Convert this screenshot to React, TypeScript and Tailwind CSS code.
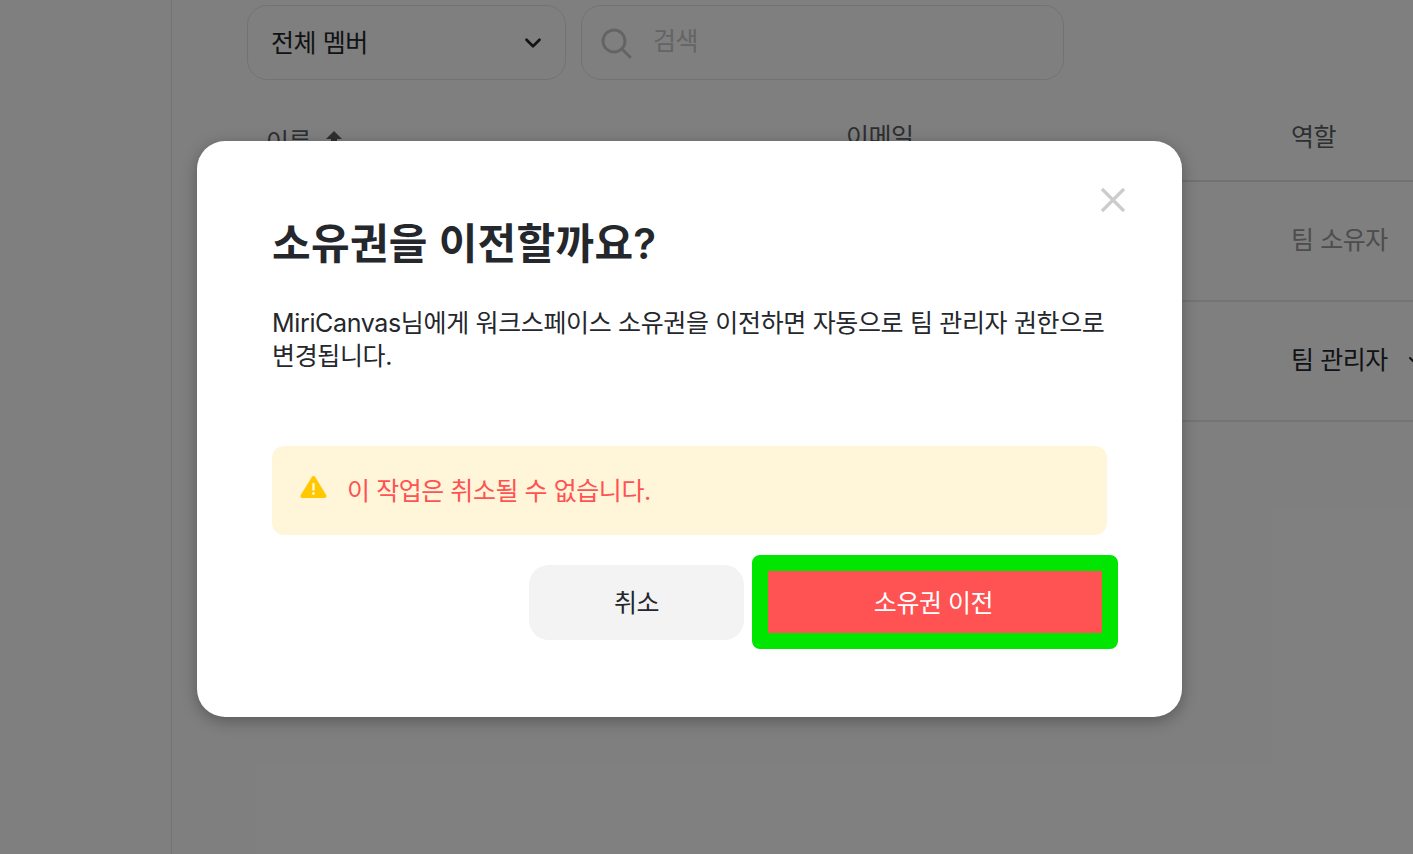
import React from "react";
import { ChevronDown } from "lucide-react";

const font = { fontFamily: '"Inter", "Noto Sans CJK KR", sans-serif' };

const rows = [
  { role: "팀 소유자", editable: false },
  { role: "팀 관리자", editable: true },
];

const App: React.FC = () => {
  return (
    <div
      style={font}
      className="relative flex h-[854px] w-[1413px] overflow-hidden bg-white text-[25px] tracking-[-0.45px] text-[#24272c]"
    >
      {/* page behind the dialog */}
      <aside className="h-full w-[172px] shrink-0 border-r border-[#e9e9e9]" />

      <main className="flex min-w-0 flex-1 flex-col pl-[75px] pt-[5px]">
        <div className="flex gap-[15px]">
          <div className="flex h-[75px] w-[319px] items-center justify-between rounded-[20px] border border-[#e5e5e5] pl-[23px] pr-[19px]">
            <span className="translate-y-[1px]">전체 멤버</span>
            <ChevronDown className="h-[26px] w-[26px] text-[#24272c]" strokeWidth={2.5} />
          </div>
          <div className="flex h-[75px] w-[483px] items-center rounded-[20px] border border-[#e5e5e5] pl-[18px]">
            <svg viewBox="0 0 32 32" className="h-[32px] w-[32px] text-[#c9c9c9]" fill="none" stroke="currentColor" strokeWidth="3">
              <circle cx="14" cy="14" r="11" />
              <path d="M22 22l8 8" strokeLinecap="round" />
            </svg>
            <span className="ml-[21px] -translate-y-[1px] text-[#c9c9c9]">검색</span>
          </div>
        </div>

        <div className="mr-[-40px] mt-[26px] flex h-[76px] items-center border-b-2 border-[#e2e2e2] text-[#5b5e63]">
          <div className="flex w-[599px] items-center gap-[15px] pl-[19px]">
            <span>이름</span>
            <svg viewBox="0 0 16 20" className="h-[20px] w-[16px] -translate-y-[2px] text-[#5b5e63]" fill="currentColor">
              <path d="M8 0l8 8h-5v12H5V8H0z" />
            </svg>
          </div>
          <div className="w-[445px] -translate-y-[5px]">이메일</div>
          <div className="-translate-y-[5px]">역할</div>
        </div>

        {rows.map((r) => (
          <div
            key={r.role}
            className="mr-[-40px] flex h-[120px] items-center border-b-2 border-[#e9e9e9] pl-[1044px]"
          >
            <span className={r.editable ? "text-[#24272c]" : "text-[#9a9a9a]"}>{r.role}</span>
            {r.editable && <ChevronDown className="ml-[16px] h-[24px] w-[24px]" strokeWidth={2} />}
          </div>
        ))}
      </main>

      {/* dim + dialog */}
      <div className="absolute inset-0 bg-black/50 pl-[197px] pt-[141px]">
        <div className="relative flex h-[576px] w-[985px] flex-col rounded-[28px] bg-white pl-[75px] pr-[75px] pt-[73px] shadow-[0_4px_16px_rgba(0,0,0,0.3)]">
          <svg viewBox="0 0 26 26" className="absolute right-[56px] top-[46px] h-[26px] w-[26px] text-[#cccccc]" fill="none" stroke="currentColor" strokeWidth="3.2">
            <path d="M2 2l22 22M24 2L2 24" />
          </svg>

          <h2 className="text-[42px] font-semibold leading-[60px] tracking-[0.3px] text-[#24272c]">소유권을 이전할까요?</h2>

          <p className="mt-[33px] text-[25px] leading-[33px] tracking-[-0.35px] text-[#24272c]">
            MiriCanvas님에게 워크스페이스 소유권을 이전하면 자동으로 팀 관리자 권한으로 변경됩니다.
          </p>

          <div className="mt-[73px] flex h-[89px] items-center rounded-[12px] bg-[#fff6d9] pl-[28px]">
            <svg viewBox="0 0 26 24" className="h-[24px] w-[27px] -translate-y-[4px]">
              <path d="M13 3L2 21h22z" fill="#ffc800" stroke="#ffc800" strokeWidth="4" strokeLinejoin="round" />
              <path d="M13 9v5.5" stroke="#fff6d9" strokeWidth="2.4" strokeLinecap="round" />
              <circle cx="13" cy="18.4" r="1.4" fill="#fff6d9" />
            </svg>
            <span className="ml-[20px] translate-y-[1px] text-[#ff5252]">이 작업은 취소될 수 없습니다.</span>
          </div>

          <div className="mr-[-11px] mt-[20px] flex items-center justify-end gap-[8px]">
            <button className="flex h-[75px] w-[215px] items-center justify-center rounded-[20px] bg-[#f3f3f3] pt-[4px] text-[#24272c]">
              취소
            </button>
            <button className="flex h-[94px] w-[366px] items-center justify-center rounded-[8px] border-[16px] border-[#00e600] bg-[#ff5252] pr-[3px] pt-[4px] text-white">
              소유권 이전
            </button>
          </div>
        </div>
      </div>
    </div>
  );
};

export default App;
